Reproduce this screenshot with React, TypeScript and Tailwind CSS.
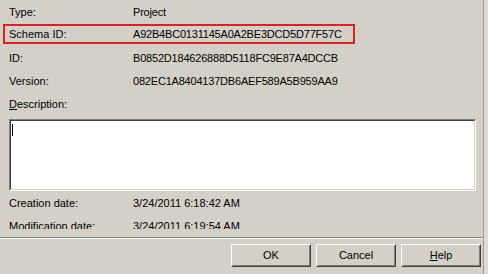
const rows = [
  { label: "Type:", value: "Project" },
  { label: "Schema ID:", value: "A92B4BC0131145A0A2BE3DCD5D77F57C", marked: true },
  { label: "ID:", value: "B0852D184626888D5118FC9E87A4DCCB" },
  { label: "Version:", value: "082EC1A8404137DB6AEF589A5B959AA9" },
];

const dates = [
  { label: "Creation date:", value: "3/24/2011 6:18:42 AM" },
  { label: "Modification date:", value: "3/24/2011 6:19:54 AM" },
];

const Button = ({ children }: { children: React.ReactNode }) => (
  <div className="w-[80px] h-[23px] border border-t-white border-l-white border-r-[#404040] border-b-[#404040]">
    <div className="h-full flex items-center justify-center border border-t-[#d4d0c8] border-l-[#d4d0c8] border-r-[#808080] border-b-[#808080]">
      {children}
    </div>
  </div>
);

export default function App() {
  return (
    <div className="w-[488px] h-[274px] bg-[#d4d0c8] overflow-hidden flex text-[11px] text-black font-['Liberation_Sans',Arial,sans-serif]">
      <div className="w-[483px] flex flex-col">
        <div className="h-[229px] shrink-0 overflow-hidden flex flex-col">
          {rows.map((row) =>
            row.marked ? (
              <div
                key={row.label}
                className="ml-[3px] w-[352px] h-[20px] mt-[1px] mb-[2px] shrink-0 flex items-center pl-[4px] pt-[1px] border-2 border-[#d8222a]"
              >
                <span className="w-[124px]">{row.label}</span>
                <span className="tracking-[-0.2px]">{row.value}</span>
              </div>
            ) : (
              <div key={row.label} className="h-[23px] shrink-0 flex items-center px-[9px] pt-[2px]">
                <span className="w-[124px]">{row.label}</span>
                <span className="tracking-[-0.2px]">{row.value}</span>
              </div>
            )
          )}
          <div className="h-[23px] shrink-0 flex items-center px-[9px] pt-[2px]">
            <span>
              <span className="underline">D</span>escription:
            </span>
          </div>
          <div className="ml-[9px] mt-[4px] w-[467px] h-[72px] shrink-0 border border-t-[#808080] border-l-[#808080] border-r-white border-b-white">
            <div className="h-full bg-white border border-t-[#404040] border-l-[#404040] border-r-[#d4d0c8] border-b-[#d4d0c8] pl-[1px] pt-[3px]">
              <div className="w-px h-[12px] bg-black" />
            </div>
          </div>
          {dates.map((row) => (
            <div key={row.label} className="h-[23px] shrink-0 flex items-center px-[9px] pt-[2px]">
              <span className="w-[124px]">{row.label}</span>
              <span>{row.value}</span>
            </div>
          ))}
        </div>
        <div className="mt-[8px] border-t border-t-[#808080] border-b border-b-white" />
        <div className="mt-[5px] flex justify-end gap-[5px] pr-[2px]">
          <Button>OK</Button>
          <Button>Cancel</Button>
          <Button>
            <span>
              <span className="underline">H</span>elp
            </span>
          </Button>
        </div>
      </div>
      <div className="w-px bg-[#a09c96]" />
      <div className="flex-1 bg-[#dedbd6]" />
    </div>
  );
}
